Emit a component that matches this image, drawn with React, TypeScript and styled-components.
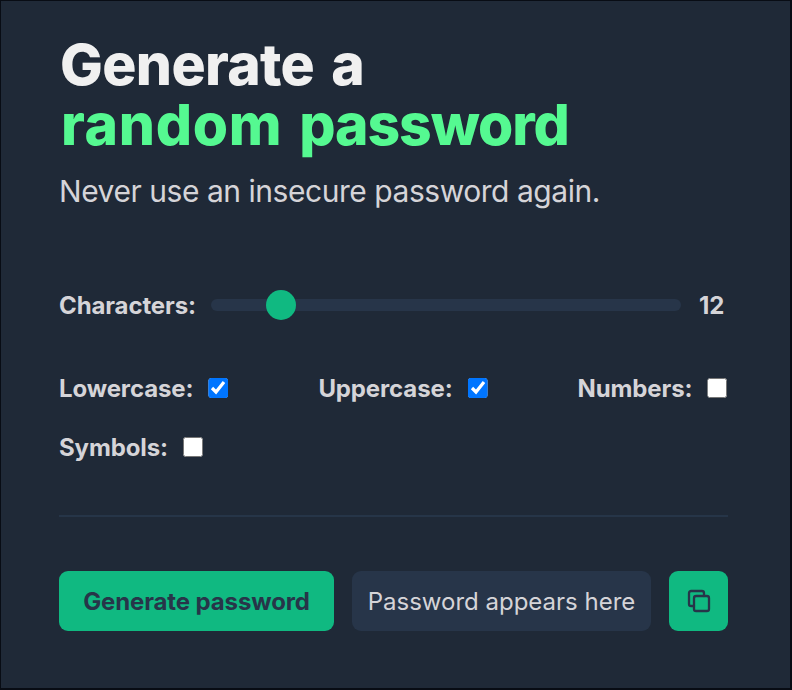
import React, { useState } from "react";
import styled, { createGlobalStyle } from "styled-components";

const Global = createGlobalStyle`
  * { box-sizing: border-box; }
  body { margin: 0; background: #1f2937; }
`;

const Page = styled.main`
  width: 792px;
  height: 690px;
  padding: 34px 62px 0 58px;
  border: 1px solid #080c14;
  border-width: 1px 2px 2px 1px;
  background: #1f2937;
  color: #d5d4d8;
  font-family: Inter, sans-serif;
`;

const Title = styled.h1`
  margin: 0;
  font-size: 57px;
  line-height: 60px;
  font-weight: 800;
  white-space: nowrap;
`;

const TitleLine = styled.span<{ $color: string }>`
  display: flex;
  height: 60px;
  color: ${(p) => p.$color};
`;

const Word = styled.span<{ $spacing: number; $gap: number }>`
  margin-left: ${(p) => p.$gap}px;
  letter-spacing: ${(p) => p.$spacing}px;
`;

const Subtitle = styled.p`
  margin: 16px 0 0;
  font-size: 30px;
  line-height: 40px;
  font-weight: 400;
  letter-spacing: -0.46px;
  white-space: nowrap;
`;

const LengthRow = styled.div`
  display: flex;
  align-items: center;
  height: 40px;
  margin-top: 74px;
  font-size: 24px;
  font-weight: 700;
  letter-spacing: -0.12px;
`;

const Slider = styled.input`
  appearance: none;
  flex: none;
  width: 470px;
  height: 12px;
  margin: 0 18px 0 auto;
  border-radius: 6px;
  background: #273549;
  &::-webkit-slider-thumb {
    appearance: none;
    width: 30px;
    height: 30px;
    border-radius: 50%;
    background: #10b981;
  }
`;

const LengthValue = styled.span`
  width: 29px;
`;

const Options = styled.div`
  display: flex;
  flex-wrap: wrap;
  justify-content: flex-start;
  gap: 19px 90px;
  margin-top: 43px;
`;

const Option = styled.label`
  display: flex;
  align-items: center;
  gap: 15px;
  height: 40px;
  font-size: 24px;
  font-weight: 700;
  letter-spacing: -0.12px;
`;

const Check = styled.input`
  width: 20px;
  height: 20px;
  margin: 0;
  clip-path: inset(0 round 3px);
`;

const Divider = styled.hr`
  height: 2px;
  margin: 48px 0 54px;
  border: 0;
  background: #263548;
`;

const Actions = styled.div`
  display: flex;
  gap: 18px;
  height: 60px;
`;

const Button = styled.button<{ $width: number }>`
  display: flex;
  align-items: center;
  justify-content: center;
  width: ${(p) => p.$width}px;
  padding: 0;
  border: 0;
  border-radius: 9px;
  background: #10b981;
  color: #273549;
  font: 700 24px Inter, sans-serif;
  letter-spacing: -0.12px;
  white-space: nowrap;
`;

const Output = styled.div`
  display: flex;
  align-items: center;
  justify-content: center;
  width: 299px;
  border-radius: 9px;
  background: #273549;
  font-size: 24px;
  white-space: nowrap;
`;

const CopyIcon = () => (
  <svg width="30" height="30" viewBox="0 0 24 24" fill="none" stroke="currentColor" strokeWidth="1.85" strokeLinecap="round" strokeLinejoin="round">
    <rect x="8" y="8" width="12" height="12" rx="1.7" />
    <path d="M16 8V5.7A1.7 1.7 0 0 0 14.3 4H5.7A1.7 1.7 0 0 0 4 5.7v8.6A1.7 1.7 0 0 0 5.7 16H8" />
  </svg>
);

const names = ["Lowercase", "Uppercase", "Numbers", "Symbols"];

export default function App() {
  const [length, setLength] = useState(12);
  const [active, setActive] = useState(["Lowercase", "Uppercase"]);
  const toggle = (name: string) =>
    setActive((a) => (a.includes(name) ? a.filter((n) => n !== name) : [...a, name]));

  return (
    <>
      <Global />
      <Page>
        <Title>
          <TitleLine $color="#f0f0f0">
            <Word $gap={1} $spacing={-0.65}>Generate</Word>{" "}
            <Word $gap={17} $spacing={0}>a</Word>
          </TitleLine>
          <TitleLine $color="#55f991">
            <Word $gap={2} $spacing={0.7}>random</Word>{" "}
            <Word $gap={17} $spacing={-1.1}>password</Word>
          </TitleLine>
        </Title>
        <Subtitle>Never use an insecure password again.</Subtitle>
        <LengthRow>
          <span>Characters:</span>
          <Slider type="range" min={8} max={40} value={length} onChange={(e) => setLength(Number(e.target.value))} />
          <LengthValue>{length}</LengthValue>
        </LengthRow>
        <Options>
          {names.map((name) => (
            <Option key={name}>
              {name}:
              <Check type="checkbox" checked={active.includes(name)} onChange={() => toggle(name)} />
            </Option>
          ))}
        </Options>
        <Divider />
        <Actions>
          <Button $width={275}>Generate password</Button>
          <Output>Password appears here</Output>
          <Button $width={59} aria-label="Copy"><CopyIcon /></Button>
        </Actions>
      </Page>
    </>
  );
}
